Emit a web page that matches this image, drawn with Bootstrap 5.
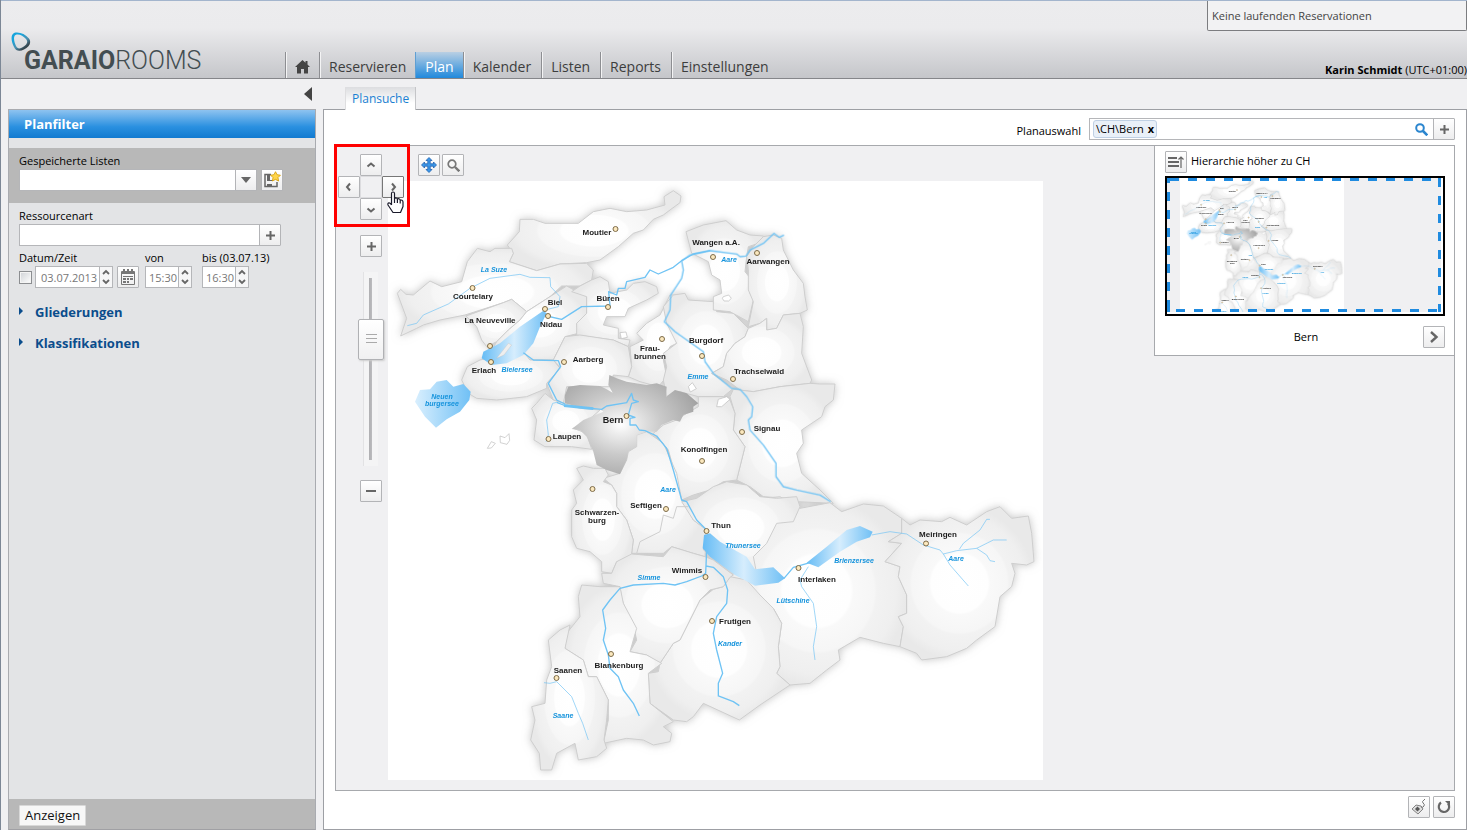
<!DOCTYPE html>
<html lang="de">
<head>
<meta charset="utf-8">
<meta name="viewport" content="width=device-width, initial-scale=1">
<title>GARAIO ROOMS – Plansuche</title>
<link href="https://cdn.jsdelivr.net/npm/bootstrap@5.3.0/dist/css/bootstrap.min.css" rel="stylesheet">
<style>
  body { font-family: "Open Sans", "Noto Sans", sans-serif; font-size: 11px; line-height: 16px; color: #000; background: #f0f0f2; border-left: 1px solid #7c8796; }
  svg { display: block; }
  .topbar { height: 79px; border-top: 1px solid #a3b5cd; border-bottom: 1px solid #85868a; background: linear-gradient(#ececee 0, #ebebed 35%, #c5c6ca 100%); }
  .brand { width: 284px; padding: 30px 0 0 9px; text-decoration: none; font: 24px/28px Roboto, sans-serif; color: #434d51; }
  .brand svg { margin-bottom: -5px; }
  .brand-name { padding-left: 14px; display: block; }
  .brand-name b { font-size: 25px; }
  .brand-name span { font-weight: 300; font-size: 25px; }
  .mainnav .nav-link { height: 26px; padding: 0 9px; font-size: 14px; line-height: 29px; color: #3d3d3d; border-left: 1px solid #8d8e92; box-shadow: inset 1px 0 #f4f4f5; }
  .mainnav .nav-link.active { color: #fff; background: linear-gradient(#b9cfe3, #2089dc); box-shadow: none; border-left-color: #5f9fd2; }
  .mainnav .active ~ .nav-link { padding-right: 10px; }
  .reservations { width: 260px; height: 30px; padding: 7px 4px; color: #444; background: #f2f2f3; border: 1px solid #7c7d80; border-top: 0; border-radius: 0 0 2px 2px; }
  .sidecol { width: 308px; margin: 0 7px; }
  .collapse-row { height: 30px; padding-top: 8px; padding-right: 4px; }
  .collapse-row button { height: 14px; line-height: 14px; }
  .sidepanel { background: #e3e4e6; border: 1px solid #a9abb0; border-bottom: 1px solid #a0a0a4; }
  .sidetitle { height: 28px; padding-left: 15px; font-size: 13px; line-height: 28px; font-weight: 700; color: #fff; background: linear-gradient(#8ec3f0, #2a90e0 60%, #127ad0); }
  .grayband { background: #b8b8b8; }
  .savedband { height: 55px; margin-top: 10px; padding: 5px 10px 0; }
  .filterform { padding: 5px 10px; }
  .daterow { margin-top: 4px; }
  .ctl { height: 22px; border: 1px solid #b5b6b9; background: #fff; border-radius: 0; padding: 0 4px; font-size: 11px; line-height: 20px; min-height: 0; }
  .ctl-date { width: 65px; padding: 0 0 0 5px; }
  .ctl-time { width: 34px; padding: 0 0 0 3px; }
  .ibtn { width: 22px; height: 22px; padding: 0; border: 1px solid #b3b4b7; border-radius: 1px; background: linear-gradient(#fff, #ededee); display: grid; place-items: center; flex: none; }
  .joined { margin-left: -1px; }
  .spin { width: 14px; display: grid; place-items: center; border: 1px solid #b5b6b9; margin-left: -1px; height: 22px; padding: 0; background: #f6f6f7; flex: none; }
  .muted-ctl { color: #777; }
  .tick { appearance: none; width: 13px; height: 13px; border: 1px solid #8c8e91; background: linear-gradient(135deg, #cfd2d6, #fff); box-shadow: inset 0 0 0 1px #f4f4f4; margin: 0 3px 0 0; flex: none; }
  .fold { font-size: 13px; line-height: 17px; font-weight: 700; color: #0b4d8c; text-decoration: none; gap: 12px; }
  .fold svg { margin-top: 3px; }
  .textbtn { height: 21px; padding: 0 5px; font-size: 13px; line-height: 19px; border: 1px solid #d8d8d8; border-radius: 1px; background: #f7f7f7; color: #111; }
  .subtab { height: 23px; margin-left: 22px; padding: 0 6px; font-size: 12px; line-height: 24px; color: #1a80d2; text-decoration: none; background: linear-gradient(#dcdde0, #fff 70%); border-right: 1px solid #c4c5c8; border-left: 1px solid #dedee0; position: relative; z-index: 1; margin-bottom: -1px; }
  .workpanel { background: #fff; border: 1px solid #9d9fa4; padding: 8px 11px 11px; }
  .picker { width: 345px; height: 22px; border: 1px solid #b5b6b9; padding: 0 5px 0 3px; }
  .tag { height: 18px; line-height: 16px; padding: 0 2px; border: 1px solid #bfd0e4; border-radius: 3px; background: #e9f0f8; }
  .tag button { border: 0; background: none; padding: 0; font-size: 11px; font-weight: 700; line-height: 14px; }
  .picker input { border: 0; min-width: 0; outline: 0; }
  .viewport { border: 1px solid #a7a9ad; background: #f0f0f2; margin-top: 5px; }
  .mapbox { padding: 35px 0 10px 52px; }
  .mapbox > svg { background: #fff; width: 655px; max-width: 100%; height: auto; }
  .toolbox { position: absolute; top: 8px; left: 82px; gap: 2px; }
  .controls { position: absolute; top: 8px; left: 2px; width: 66px; }
  .pad { display: grid; grid-template-columns: repeat(3, 22px); grid-auto-rows: 22px; }
  .padmid { border: 1px solid #dcdcdf; }
  .rail { position: relative; width: 26px; height: 194px; margin: 15px 0 14px; background: linear-gradient(90deg, transparent 5px, #e2e2e4 5px, #e2e2e4 6px, #f4f4f5 6px, #f4f4f5 20px, transparent 20px); }
  .rail input { appearance: none; position: absolute; left: 50%; top: 50%; width: 194px; height: 26px; margin: 0; background: none; transform: translate(-50%, -50%) rotate(-90deg); }
  .rail input::-webkit-slider-runnable-track { height: 26px; background: linear-gradient(transparent 11px, #aeaeb1 11px, #bcbcbf 14px, transparent 14px) 50% 50% / 182px 26px no-repeat; }
  .rail input::-webkit-slider-thumb { appearance: none; width: 41px; height: 26px; border: 1px solid #b0b1b4; border-radius: 2px; background: linear-gradient(90deg, #aaa 1px, transparent 1px) 16px 50% / 4px 11px no-repeat, linear-gradient(90deg, #aaa 1px, transparent 1px) 20px 50% / 4px 11px no-repeat, linear-gradient(90deg, #aaa 1px, transparent 1px) 24px 50% / 4px 11px no-repeat, linear-gradient(90deg, #f0f0f1, #fff); box-shadow: -1px 1px 2px #ccc; }
  .marker { position: absolute; left: -2px; top: -2px; width: 76px; height: 83px; border: 3px solid #f00; pointer-events: none; }
  .pointer { position: absolute; left: 51px; top: 45px; pointer-events: none; }
  .overview { width: 300px; background: #fff; border: solid #a7a9ad; border-width: 0 0 1px 1px; padding: 5px 9px 7px 10px; }
  .thumb { position: relative; height: 140px; margin-top: 3px; border: 2px solid #000; background: #f0f0f2; overflow: hidden; }
  .thumb .mini { width: 164px; height: 136px; margin-left: 13px; background: #fff; }
  .thumb .frame { position: absolute; inset: 0; width: 100%; height: 100%; }
  .thumbnote { margin-top: 10px; }
  .town { font: 700 8px "Liberation Sans", Arial, sans-serif; fill: #1c1c1c; }
  .town.capital { font-size: 9px; }
  .water { font: italic 700 7px "Liberation Sans", Arial, sans-serif; fill: #1593dc; }
</style>
</head>
<body class="min-vh-100 d-flex flex-column">

<header class="topbar d-flex flex-shrink-0">
  <a class="brand flex-shrink-0" href="#">
    <svg width="21" height="21" viewBox="0 0 21 21"><defs><linearGradient id="ring" x1="0" y1="0" x2=".8" y2="1"><stop offset=".3" stop-color="#16a4dc"/><stop offset=".62" stop-color="#4c90b0"/><stop offset=".85" stop-color="#36454d"/></linearGradient></defs><path fill="url(#ring)" fill-rule="evenodd" d="M4 2C9 .5 15 3 19 7.500C22 12 19 16 14 18.500C10 20.500 6 20.500 4 16C1 10 .5 4 4 2ZM5.500 4C3 5.500 4 11 6 15C7.500 18 10 18 13 16C17 13.500 18.500 11 16 8C13 4.500 8.500 2.500 5.500 4Z"/></svg>
    <span class="brand-name"><b>GARAIO</b><span>ROOMS</span></span>
  </a>
  <nav class="mainnav nav flex-nowrap align-items-end" aria-label="Hauptnavigation">
    <a class="nav-link" href="#" aria-label="Start"><svg class="mt-2" width="15" height="14" viewBox="0 0 15 14"><path fill="#444" d="M7.500 0 0 7h2v6.500h4V9h3v4.500h4V7h2L12.500 4.500V1h-2v1.800Z"/></svg></a>
    <a class="nav-link" href="#">Reservieren</a>
    <a class="nav-link active" href="#" aria-current="page">Plan</a>
    <a class="nav-link" href="#">Kalender</a>
    <a class="nav-link" href="#">Listen</a>
    <a class="nav-link" href="#">Reports</a>
    <a class="nav-link" href="#">Einstellungen</a>
  </nav>
  <div class="ms-auto d-flex flex-column justify-content-between align-items-end flex-shrink-0">
    <div class="reservations">Keine laufenden Reservationen</div>
    <div><b>Karin Schmidt</b> (UTC+01:00)</div>
  </div>
</header>

<div class="d-flex flex-grow-1">
  <aside class="sidecol d-flex flex-column flex-shrink-0">
    <div class="collapse-row d-flex justify-content-end align-items-start">
      <button class="border-0 bg-transparent p-0" type="button" aria-label="Filter einklappen"><svg width="8" height="14" viewBox="0 0 8 14"><path fill="#444" d="M8 0v14L0 7Z"/></svg></button>
    </div>
    <div class="sidepanel flex-grow-1 d-flex flex-column">
      <div class="sidetitle">Planfilter</div>
      <div class="grayband savedband">
        <label for="saved">Gespeicherte Listen</label>
        <div class="d-flex">
          <input id="saved" class="ctl" style="width:217px">
          <button class="ibtn joined" type="button" aria-label="Liste öffnen"><svg width="10" height="6" viewBox="0 0 10 6"><path fill="#666" d="M0 0h10L5 6Z"/></svg></button>
          <button class="ibtn ms-1" type="button" aria-label="Liste speichern"><svg width="18" height="18" viewBox="0 0 18 18"><path fill="none" stroke="#666" stroke-width="1.500" d="M8 3.500H2v12h12V11"/><path fill="#666" d="M4 3h3v6h3v1H4ZM4 13h5v3H4Z"/><path fill="#ffd54a" stroke="#d49a00" stroke-width=".8" d="m12.500.7 1.600 3 3.300.5-2.400 2.400.6 3.400-3.100-1.600-3.100 1.600.6-3.400L7.600 4.200l3.300-.5Z"/></svg></button>
        </div>
      </div>
      <div class="filterform">
        <label for="resource">Ressourcenart</label>
        <div class="d-flex">
          <input id="resource" class="ctl" style="width:241px">
          <button class="ibtn joined" type="button" aria-label="Ressourcenart hinzufügen"><svg width="9" height="9"><path fill="#666" d="M3.500 0h2v3.500H9v2H5.500V9h-2V5.500H0v-2h3.500Z"/></svg></button>
        </div>
        <div class="daterow d-flex align-items-end">
          <div style="width:126px">
            <label for="date">Datum/Zeit</label>
            <div class="d-flex align-items-center">
              <input type="checkbox" class="tick" aria-label="Datum aktiv">
              <input id="date" class="ctl ctl-date muted-ctl" value="03.07.2013">
              <button class="spin" type="button" aria-label="Datum ändern"><svg width="8" height="16" viewBox="0 0 8 16"><path fill="none" stroke="#666" stroke-width="1.800" d="m1 5 3-3 3 3M1 11l3 3 3-3"/></svg></button>
              <button class="ibtn ms-1" type="button" aria-label="Kalender"><svg width="16" height="16" viewBox="0 0 16 16"><path fill="none" stroke="#777" d="M1.500 2.500h13v13h-13Z"/><path fill="#777" d="M1 3h14v2H1ZM3 0h2v3H3ZM7 0h2v3H7ZM11 0h2v3h-2ZM3 7h10v1H3ZM3 9h3v2H3ZM7 9h2v2H7ZM10 9h3v2h-3ZM3 12h3v2H3ZM7 12h2v2H7Z"/></svg></button>
            </div>
          </div>
          <div style="width:57px">
            <label for="from">von</label>
            <div class="d-flex">
              <input id="from" class="ctl ctl-time muted-ctl" value="15:30">
              <button class="spin" type="button" aria-label="Von ändern"><svg width="8" height="16" viewBox="0 0 8 16"><path fill="none" stroke="#666" stroke-width="1.800" d="m1 5 3-3 3 3M1 11l3 3 3-3"/></svg></button>
            </div>
          </div>
          <div>
            <label for="until">bis (03.07.13)</label>
            <div class="d-flex">
              <input id="until" class="ctl ctl-time muted-ctl" value="16:30">
              <button class="spin" type="button" aria-label="Bis ändern"><svg width="8" height="16" viewBox="0 0 8 16"><path fill="none" stroke="#666" stroke-width="1.800" d="m1 5 3-3 3 3M1 11l3 3 3-3"/></svg></button>
            </div>
          </div>
        </div>
        <div class="d-flex flex-column mt-3" style="gap:14px">
          <a class="fold d-flex" href="#"><svg width="4" height="8" viewBox="0 0 4 8"><path fill="#0b4d8c" d="m0 0 4 4-4 4Z"/></svg>Gliederungen</a>
          <a class="fold d-flex" href="#"><svg width="4" height="8" viewBox="0 0 4 8"><path fill="#0b4d8c" d="m0 0 4 4-4 4Z"/></svg>Klassifikationen</a>
        </div>
      </div>
      <div class="grayband mt-auto d-flex align-items-center" style="height:30px;padding:2px 10px 0">
        <button class="textbtn" type="button">Anzeigen</button>
      </div>
    </div>
  </aside>

  <main class="flex-grow-1 d-flex flex-column">
    <div class="d-flex align-items-end" style="height:30px"><a class="subtab" href="#">Plansuche</a></div>
    <div class="workpanel flex-grow-1 d-flex flex-column">
      <div class="d-flex justify-content-end align-items-center">
        <label class="pt-1 me-2" for="plan">Planauswahl</label>
        <div class="picker d-flex align-items-center">
          <span class="tag d-flex align-items-center gap-1">\CH\Bern <button type="button" aria-label="Entfernen">x</button></span>
          <input id="plan" class="flex-grow-1">
          <svg width="13" height="13" viewBox="0 0 13 13"><circle cx="5" cy="5" r="3.800" fill="none" stroke="#2b86cf" stroke-width="2"/><path stroke="#2b86cf" stroke-width="2.600" d="m8 8 4.300 4.300"/></svg>
        </div>
        <button class="ibtn joined" type="button" aria-label="Plan hinzufügen"><svg width="9" height="9"><path fill="#666" d="M3.500 0h2v3.500H9v2H5.500V9h-2V5.500H0v-2h3.500Z"/></svg></button>
      </div>

      <div class="viewport flex-grow-1 position-relative d-flex justify-content-between align-items-start mb-1">
        <div class="mapbox">
          <svg viewBox="388 181 655 599" role="img" aria-label="Karte Kanton Bern">
            <defs>
              <radialGradient id="land"><stop offset="0" stop-color="#fff"/><stop offset=".38" stop-color="#fefefe"/><stop offset=".41" stop-color="#f9f9f9"/><stop offset=".64" stop-color="#f6f6f6"/><stop offset=".67" stop-color="#f2f2f2"/><stop offset=".88" stop-color="#efefef"/><stop offset="1" stop-color="#e9e9e9"/></radialGradient>
              <radialGradient id="core" cx=".42" cy=".5" r=".6"><stop offset="0" stop-color="#fff"/><stop offset=".15" stop-color="#eee"/><stop offset=".5" stop-color="#cacaca"/><stop offset="1" stop-color="#a4a4a4"/></radialGradient>
              <linearGradient id="lake"><stop offset="0" stop-color="#66bcf5"/><stop offset=".5" stop-color="#d6edfd"/><stop offset="1" stop-color="#70c0f5"/></linearGradient>
              <linearGradient id="lakeEdge"><stop offset="0" stop-color="#d9effe"/><stop offset="1" stop-color="#70c0f5"/></linearGradient>
              <filter id="glow" x="-10%" y="-10%" width="120%" height="120%"><feDropShadow dx="0" dy="0" stdDeviation="4" flood-color="#999" flood-opacity=".55"/></filter>
            </defs>
            <g id="bern">
              <g filter="url(#glow)" fill="url(#land)" stroke="#cecece" stroke-width="3" stroke-linejoin="round">
                <g transform="translate(380 180) scale(.33333)">
                  <path d="M420 118 460 118 495 130 595 130 640 95 690 85 740 95 800 90 855 75 852 50 880 32 903 48 900 68 870 90 850 105 820 118 790 150 760 160 715 200 660 240 620 248 540 252 470 272 388 245 400 220 382 195 418 155Z"/>
                  <path d="M62 328 78 343 100 345 150 303 185 320 245 305 262 245 292 205 330 215 345 205 395 205 400 220 388 245 470 272 540 252 620 250 640 270 635 300 600 318 545 318 510 350 440 395 395 358 370 368 255 405 180 420 130 435 110 445 62 468 80 415 52 340Z"/>
                  <path d="M258 408 370 368 395 358 440 395 420 420 385 450 350 485 320 500 305 480 290 440Z"/>
                  <path d="M440 395 510 350 560 318 600 340 620 350 620 400 590 430 595 460 555 470 520 540 450 540 430 515 330 520 350 485 385 450 420 420Z"/>
                  <path d="M600 318 635 300 660 290 685 305 690 340 740 330 760 310 795 305 830 320 835 340 800 360 745 385 735 410 680 410 670 435 715 445 715 475 750 480 745 500 700 480 590 465 590 430 620 400 620 350 575 335Z"/>
                  <path d="M870 345 905 345 925 370 920 420 895 455 890 490 870 500 850 540 860 590 835 620 780 605 745 590 755 560 750 500 790 480 770 460 800 430 840 405 855 375Z"/>
                  <path d="M555 470 600 465 700 480 745 500 755 560 745 590 700 585 690 620 560 620 550 670 520 660 500 610 540 560 520 540Z"/>
                  <path d="M300 540 430 515 450 540 520 540 540 565 500 610 500 625 440 650 350 660 290 655 265 640 245 600 262 560Z"/>
                  <path d="M520 660 550 670 600 685 660 690 620 725 580 745 620 760 635 808 575 800 495 800 462 780 470 720 455 685 470 670 495 640Z"/>
                </g>
                <g transform="translate(620 180) scale(.33333)">
                  <path d="M160 345 195 340 205 360 280 365 290 395 340 400 385 445 375 470 345 490 320 520 310 560 275 580 340 625 310 650 235 650 180 635 140 650 130 600 140 560 130 520 170 490 140 430 130 380Z"/>
                  <path d="M198 155 250 135 318 122 350 150 390 165 430 168 430 185 385 200 380 230 375 275 395 300 390 340 400 360 385 425 330 395 280 390 280 350 305 340 300 300 275 285 265 245 215 220Z"/>
                  <path d="M430 170 460 165 485 175 490 210 520 270 550 310 555 350 562 390 540 400 490 405 470 445 440 450 440 415 420 430 385 440 400 365 385 330 385 270 380 230 400 200Z"/>
                  <path d="M385 445 420 430 440 415 440 450 470 445 490 405 540 400 550 440 545 520 575 600 570 610 480 620 400 635 360 630 320 600 275 580 310 560 320 520 345 490 375 470Z"/>
                  <path d="M340 628 400 635 480 620 570 610 600 612 645 612 640 660 615 680 605 710 545 750 550 790 530 820 545 880 600 930 640 970 530 965 500 955 430 950 390 920 350 900 365 840 375 800 340 750 345 700 330 650Z"/>
                  <path d="M235 650 310 650 330 660 345 700 340 750 375 800 365 840 350 900 310 905 270 930 220 945 185 960 165 880 145 810 100 760 130 735 170 720 200 700 235 680Z"/>
                </g>
                <g transform="translate(760 480) scale(.33333)">
                  <path d="M-30 60 60 50 120 85 210 68 245 95 310 72 370 78 425 115 425 160 385 185 425 190 375 245 420 260 415 290 440 345 440 400 415 410 430 440 420 500 370 490 300 472 235 510 240 540 200 570 150 610 90 615 50 580 60 560 55 500 65 430 40 385 0 345-100 310-30 210Z"/>
                  <path d="M425 115 450 135 480 120 545 125 570 112 620 135 680 95 720 80 755 115 805 108 815 160 822 245 800 255 755 250 765 280 755 320 720 350 705 440 650 480 620 505 560 530 485 540 470 520 420 500 430 440 415 410 440 400 440 345 415 290 420 260 375 245 425 190 385 185 425 160Z"/>
                </g>
                <g transform="translate(480 360) scale(.33333)">
                  <path d="M470 225 500 215 550 250 590 340 605 420 640 480 680 510 675 590 640 580 575 560 550 580 470 580 455 580 460 540 440 480 410 440 410 400 395 375 370 355 420 340 440 300 445 275 470 260Z"/>
                  <path d="M605 425 650 415 700 380 740 365 800 375 840 410 890 415 950 410 960 440 940 485 890 490 860 550 820 590 830 640 740 620 670 570 680 510 640 480Z"/>
                  <path fill="none" d="M470 580 480 545 540 515 550 465 580 475 590 440 625 440"/>
                  <path d="M290 325 310 318 340 325 375 325 385 345 370 365 395 375 410 400 410 440 440 480 460 540 455 580 450 605 410 605 395 640 365 635 365 605 330 575 290 565 275 530 275 450 290 430 280 390 310 360Z"/>
                </g>
                <g transform="translate(500 540) scale(.33333)">
                  <path d="M670 140 690 110 740 120 780 165 820 205 845 250 835 320 840 380 830 400 870 435 780 495 718 540 610 490 580 530 560 545 520 540 450 490 445 400 475 395 480 370 520 310 540 300 600 180 640 148Z"/>
                  <path d="M305 100 335 100 350 65 395 42 490 50 515 20 580 40 615 50 640 60 700 105 690 112 670 140 630 150 600 180 540 300 520 310 480 370 440 345 390 335 410 300 400 255 380 220 365 175 360 140 310 130Z"/>
                  <path d="M245 135 300 140 360 140 370 190 410 265 390 335 440 345 485 370 445 400 450 490 520 545 490 560 515 580 510 605 460 615 430 600 380 595 310 610 325 540 325 480 290 410 265 410 250 360 195 325 200 280 240 230 235 170Z"/>
                  <path d="M210 255 195 325 250 360 265 410 290 410 325 480 320 540 312 600 320 625 290 650 235 660 225 610 170 640 155 690 122 690 118 640 92 600 105 540 95 500 135 490 140 420 155 380 145 300 180 270Z"/>
                </g>
              </g>
              <path transform="translate(480 360) scale(.33333)" fill="url(#core)" d="M255 105 265 80 300 75 360 78 380 88 398 98 385 75 388 45 410 55 440 65 500 75 530 70 560 80 558 110 585 90 620 100 655 130 640 140 640 155 610 165 600 185 580 180 545 195 530 215 500 215 470 225 470 260 445 275 440 300 420 343 380 330 350 315 340 275 320 230 300 210 275 207 310 180 370 155 360 148 310 145 255 130Z"/>
              <g transform="translate(380 180) scale(.33333)" fill="#fff" stroke="#bbb" stroke-width="2"><path d="m360 768 15 5 12-12 2 20-8 12-20-5ZM322 805l12-20 12 5-12 14ZM720 458l18-2 4 16-18 4ZM925 620l12-12 12 18-18 10Z"/></g>
              <path transform="translate(620 180) scale(.33333)" fill="#fff" stroke="#bbb" stroke-width="2" d="m310 350-3 5 5 8 14 0 8-8-8-10ZM290 680l5-22 25-8 10 8-25 22Z"/>
              <g transform="translate(380 180) scale(.33333)">
                <path fill="url(#lakeEdge)" d="M120 630 150 628 170 605 200 600 220 620 250 612 272 635 268 660 240 695 200 718 168 743 135 710 105 665Z"/>
                <path fill="url(#lake)" d="M490 392 500 400 480 440 460 490 430 525 380 550 335 555 305 535 310 515 360 490 420 440Z"/>
                <path fill="#eee" stroke="#bbb" d="M350 535 385 490 395 495 372 525Z"/>
              </g>
              <path transform="translate(480 360) scale(.33333)" fill="url(#lake)" d="M672 525 690 520 720 545 800 590 825 628 880 622 915 655 895 668 825 677 765 645 690 590 668 565Z"/>
              <path transform="translate(760 480) scale(.33333)" fill="url(#lake)" d="M140 248 200 200 260 150 300 138 338 155 330 172 290 185 240 215 175 262Z"/>
              <g fill="none" stroke="#6fc3f4" stroke-width="4" stroke-linejoin="round">
                <g transform="translate(380 180) scale(.33333)">
                  <path d="M500 408 545 418 605 380 690 378 686 335 710 345 715 325 735 325 740 305 795 292 810 270 835 282 880 262 905 242 940 222 990 212"/>
                  <path d="M430 518 460 540 535 542 542 560 505 610 530 660 555 672"/>
                  <path stroke-width="2" d="M82 437 110 430 130 405 205 372 270 325 330 295 420 283 450 292 510 293 512 320 540 350 535 380 495 390"/>
                </g>
                <g transform="translate(620 180) scale(.33333)">
                  <path d="M185 243 210 225 270 212 350 222 360 230 378 228 390 210 430 190 462 160 478 172 492 165M185 243 190 270 185 295 152 345 150 390 133 425 165 455 250 515 255 545 280 580 335 625 360 628 380 650 398 680 395 710 385 720 390 750 430 795 468 850 468 890 490 920 530 930 600 945 632 965"/>
                </g>
                <g transform="translate(480 360) scale(.33333)">
                  <path d="M230 127 250 135 310 143 365 148 380 138 440 128 455 100 460 120 475 125 455 130 445 165 465 172 450 175 450 195 468 195 478 210 495 212 530 228 560 265 580 330 605 420 620 425 650 480 680 510"/>
                  <path stroke-width="8" d="M252 137 310 143 340 146"/>
                  <path stroke-width="2" d="M230 127 218 130 200 180 205 225 198 245"/>
                </g>
                <g transform="translate(500 540) scale(.33333)">
                  <path d="M620 30 617 100 605 108 560 125 525 135 490 130 400 135 360 145 330 180 308 210 317 265 310 300 325 345 330 385 355 410 370 450 400 490 418 528M618 78 640 82 670 110 683 150 680 190 650 230 640 280 650 330 668 400 655 430 655 468 700 485 718 497"/>
                  <path stroke-width="2" d="M132 428 150 430 170 425 215 470 235 520 248 550 265 600"/>
                </g>
                <g transform="translate(760 480) scale(.33333)">
                  <path d="M72 295 100 262 150 248"/>
                  <path stroke-width="2" d="M145 260 120 300 125 320 160 370 170 440 160 500 165 540M335 165 390 155 440 162 490 195 540 210 550 222 590 212 650 205 700 180 740 180M550 222 570 255 625 318M598 208 610 190 660 150 680 118 690 118M650 205 680 225 690 242 705 245"/>
                </g>
              </g>
              <g fill="#fbe8be" stroke="#7c6a48">
                <circle cx="615.500" cy="229" r="2.500"/><circle cx="472.500" cy="288" r="2.500"/><circle cx="545" cy="309" r="2.500"/><circle cx="548" cy="316" r="2.500"/><circle cx="608" cy="307" r="2.500"/><circle cx="490" cy="346" r="2.500"/><circle cx="491" cy="362" r="2.500"/><circle cx="564" cy="362" r="2.500"/><circle cx="662" cy="339" r="2.500"/><circle cx="702" cy="356" r="2.500"/><circle cx="713" cy="257" r="2.500"/><circle cx="757" cy="253" r="2.500"/><circle cx="733" cy="379" r="2.500"/><circle cx="742" cy="432" r="2.500"/><circle cx="702" cy="461" r="2.500"/><circle cx="626.500" cy="416" r="2.500"/><circle cx="548.500" cy="439" r="2.500"/><circle cx="592.500" cy="489" r="2.500"/><circle cx="666" cy="509" r="2.500"/><circle cx="706.500" cy="531" r="2.500"/><circle cx="705.500" cy="577" r="2.500"/><circle cx="798.500" cy="568" r="2.500"/><circle cx="926" cy="543.500" r="2.500"/><circle cx="712" cy="621" r="2.500"/><circle cx="611" cy="654" r="2.500"/><circle cx="556.500" cy="678" r="2.500"/>
              </g>
              <g class="town" text-anchor="middle">
                <text x="597" y="235">Moutier</text><text x="473" y="299">Courtelary</text><text x="555" y="305">Biel</text><text x="608" y="301">Büren</text><text x="490" y="323">La Neuveville</text><text x="551" y="327">Nidau</text><text x="588" y="362">Aarberg</text><text x="484" y="373">Erlach</text><text x="650" y="351">Frau-</text><text x="650" y="359">brunnen</text><text x="706" y="343">Burgdorf</text><text x="716" y="245">Wangen a.A.</text><text x="768" y="264">Aarwangen</text><text x="759" y="374">Trachselwald</text><text x="767" y="431">Signau</text><text x="704" y="452">Konolfingen</text><text x="567" y="439">Laupen</text><text x="597" y="515">Schwarzen-</text><text x="597" y="523">burg</text><text x="646" y="508">Seftigen</text><text x="721" y="528">Thun</text><text x="687" y="573">Wimmis</text><text x="817" y="582">Interlaken</text><text x="938" y="537">Meiringen</text><text x="735" y="624">Frutigen</text><text x="619" y="668">Blankenburg</text><text x="568" y="673">Saanen</text>
              </g>
              <text class="town capital" text-anchor="middle" x="613" y="423">Bern</text>
              <g class="water" text-anchor="middle">
                <text x="494" y="272">La Suze</text><text x="517" y="372">Bielersee</text><text x="442" y="399">Neuen</text><text x="442" y="406">burgersee</text><text x="729" y="262">Aare</text><text x="698" y="379">Emme</text><text x="668" y="492">Aare</text><text x="743" y="548">Thunersee</text><text x="854" y="563">Brienzersee</text><text x="956" y="561">Aare</text><text x="793" y="603">Lütschine</text><text x="649" y="580">Simme</text><text x="730" y="646">Kander</text><text x="563" y="718">Saane</text>
              </g>
            </g>
          </svg>
        </div>

        <div class="toolbox d-flex">
          <button class="ibtn" type="button" aria-label="Verschieben"><svg width="16" height="16" viewBox="0 0 16 16"><path fill="#3b97e8" stroke="#1f5fae" stroke-width=".8" d="m8 .5 3 3H9.200v3.300h3.300V5l3 3-3 3V9.200H9.200v3.300H11l-3 3-3-3h1.800V9.200H3.500V11l-3-3 3-3v1.800h3.300V3.500H5Z"/></svg></button>
          <button class="ibtn" type="button" aria-label="Zoombereich"><svg width="13" height="13" viewBox="0 0 13 13"><circle cx="5" cy="5" r="3.800" fill="none" stroke="#777" stroke-width="1.700"/><path stroke="#777" stroke-width="2.400" d="m8 8 4.300 4.300"/></svg></button>
        </div>

        <div class="controls d-flex flex-column align-items-center">
          <div class="pad">
            <span></span>
            <button class="ibtn" type="button" aria-label="Nach oben"><svg width="10" height="10" viewBox="0 0 10 10"><path fill="none" stroke="#666" stroke-width="2" d="m1.500 6.500 3.500-3 3.500 3"/></svg></button>
            <span></span>
            <button class="ibtn" type="button" aria-label="Nach links"><svg width="10" height="10" viewBox="0 0 10 10"><path fill="none" stroke="#666" stroke-width="2" d="M6 1.500 3 5l3 3.500"/></svg></button>
            <span class="padmid"></span>
            <button class="ibtn" type="button" aria-label="Nach rechts" style="border-color:#777"><svg width="10" height="10" viewBox="0 0 10 10"><path fill="none" stroke="#666" stroke-width="2" d="M4 1.500 7 5 4 8.500"/></svg></button>
            <span></span>
            <button class="ibtn" type="button" aria-label="Nach unten"><svg width="10" height="10" viewBox="0 0 10 10"><path fill="none" stroke="#666" stroke-width="2" d="m1.500 4.500 3.500 3 3.500-3"/></svg></button>
            <span></span>
          </div>
          <button class="ibtn" style="margin-top:15px" type="button" aria-label="Vergrössern"><svg width="9" height="9"><path fill="#666" d="M3.500 0h2v3.500H9v2H5.500V9h-2V5.500H0v-2h3.500Z"/></svg></button>
          <div class="rail"><input type="range" min="0" max="100" value="69" aria-label="Zoomstufe"></div>
          <button class="ibtn" type="button" aria-label="Verkleinern"><svg width="10" height="2"><path fill="#666" d="M0 0h10v2H0Z"/></svg></button>
        </div>
        <div class="marker"></div>
        <svg class="pointer" width="17" height="23" viewBox="0 0 17 23"><path fill="#fff" stroke="#1a1a2a" stroke-width="1.200" stroke-linejoin="round" d="M4.500 14V2.500Q4.500 1 6 1T7.500 2.500V8Q8 6.800 9.200 7T10.400 8.500Q11 7.500 12 7.800T13.200 9.300Q14 8.700 15 9.300T16 11V15.500L13.500 21.500H6L1 14Q.5 12 2 11.800T4.500 14M7.500 8v4M10.400 8.500V12M13.200 9.300V12.500"/></svg>

        <section class="overview flex-shrink-0">
          <div class="d-flex align-items-start gap-1">
            <button class="ibtn" type="button" aria-label="Hierarchie höher"><svg width="16" height="12" viewBox="0 0 16 12"><path fill="#666" d="M0 1h9v2H0ZM0 5h11v2H0ZM0 9h11v2H0Z"/><path fill="none" stroke="#666" stroke-width="1.200" d="M13 12V1M10.500 3.500 13 1l2.500 2.500"/></svg></button>
            <span class="pt-1" style="line-height:12px">Hierarchie höher zu CH</span>
          </div>
          <div class="thumb">
            <svg class="mini" viewBox="388 181 655 544" preserveAspectRatio="xMidYMin slice" aria-hidden="true"><use href="#bern"/></svg>
            <svg class="frame" viewBox="0 0 276 136" preserveAspectRatio="none" aria-hidden="true"><path fill="none" stroke="#fff" stroke-width="2" d="M275 0v136M0 135h276"/><path fill="none" stroke="#1f8be0" stroke-width="3" stroke-dasharray="9 9" d="M3 1.500H274M272.500 0V134M9 132.500H274M1.500 14V134"/><path fill="#1f8be0" d="M0 0h12v3H3v2H0ZM0 122h3v12H0Z"/></svg>
          </div>
          <div class="thumbnote d-flex align-items-center">
            <span class="flex-grow-1 text-center ps-4">Bern</span>
            <button class="ibtn" type="button" aria-label="Weiter"><svg width="10" height="12" viewBox="0 0 10 12"><path fill="none" stroke="#666" stroke-width="2.400" d="m2 1 5.500 5L2 11"/></svg></button>
          </div>
        </section>
      </div>

      <div class="d-flex justify-content-end" style="gap:3px;margin-top:1px">
        <button class="ibtn" type="button" aria-label="Plan drucken"><svg width="16" height="16" viewBox="0 0 16 16"><path fill="#ddd" stroke="#777" stroke-width=".9" d="m1 10 4-4 5 1 2 3-5 5Z"/><path fill="#555" d="m4 10 2.500-2.500L9 10l-2.500 2.500Z"/><path fill="none" stroke="#777" d="M10 8q2 1 3-1t-1-3 2-4"/></svg></button>
        <button class="ibtn" type="button" aria-label="Neu laden"><svg width="14" height="14" viewBox="0 0 14 14"><path fill="none" stroke="#666" stroke-width="2.200" d="M4 2.500A5.200 5.200 0 1 0 11 3.500"/><path fill="#666" d="M8 1h5v5Z"/></svg></button>
      </div>
    </div>
  </main>
</div>
<script src="https://cdn.jsdelivr.net/npm/bootstrap@5.3.0/dist/js/bootstrap.bundle.min.js"></script>
</body>
</html>
